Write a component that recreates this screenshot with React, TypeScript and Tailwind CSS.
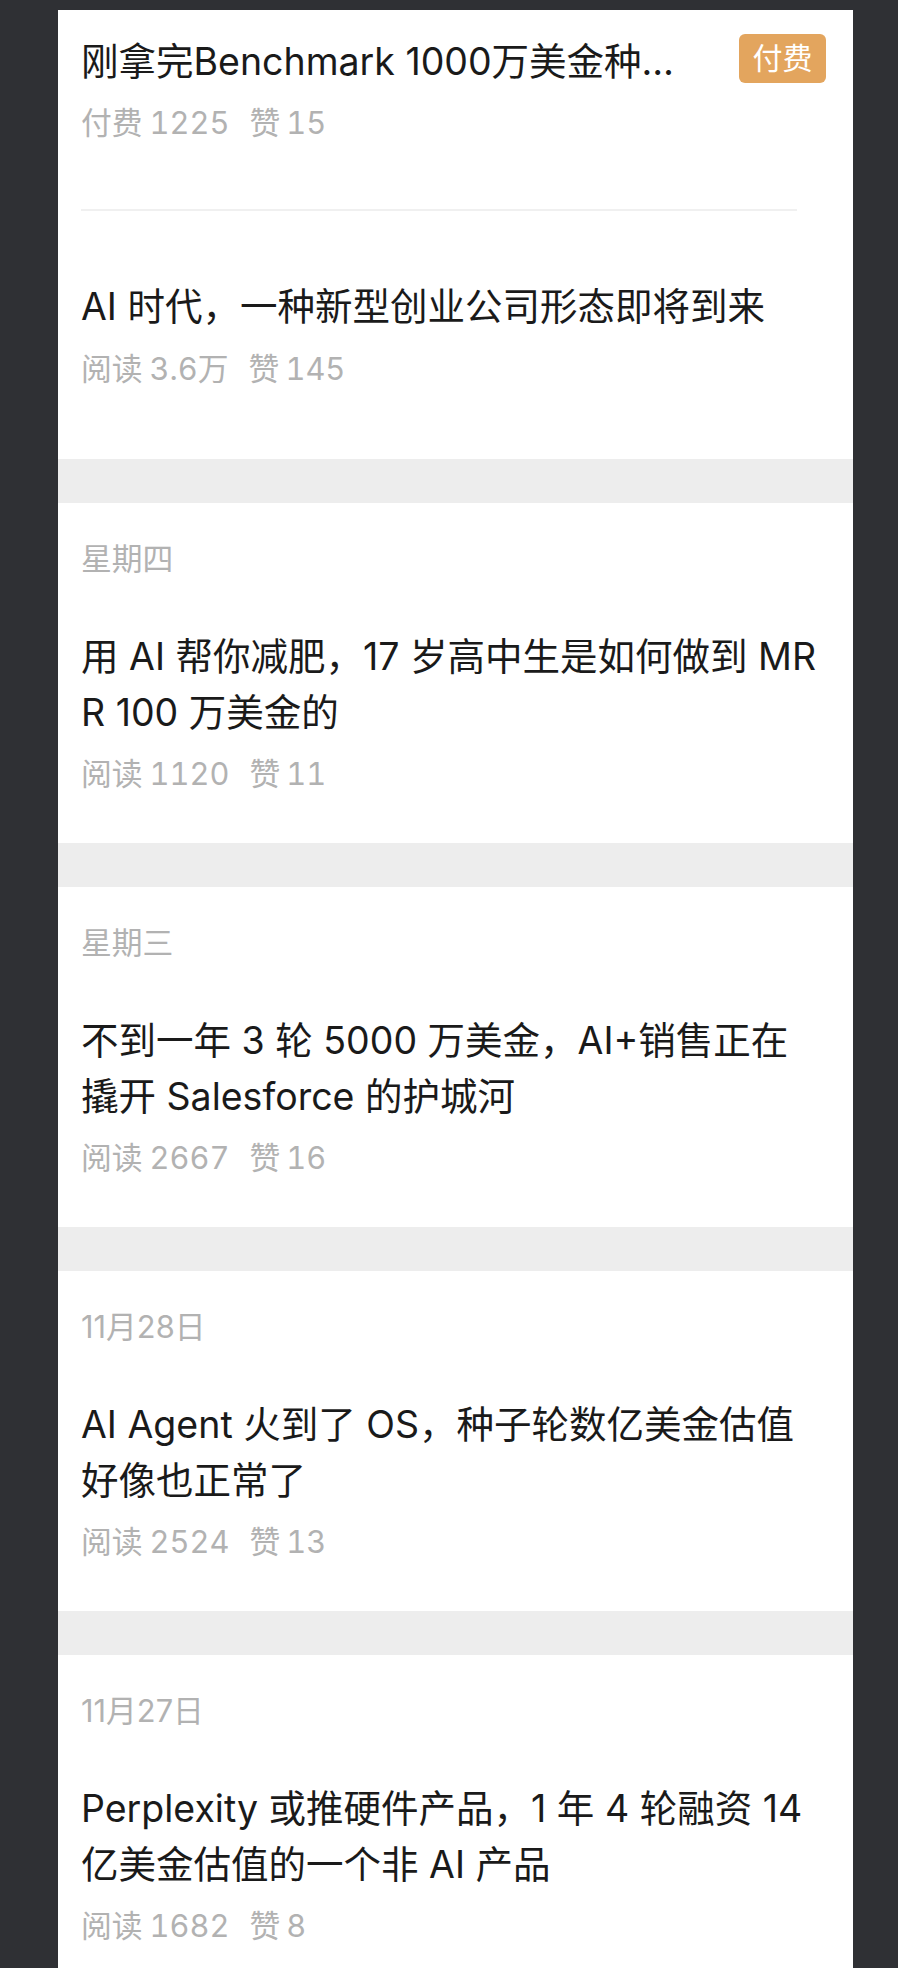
import React from "react";

const FONT = "font-['Inter','Noto_Sans_CJK_SC',sans-serif]";

function Meta({ label, count, likes }: { label: string; count: string; likes: string }) {
  return (
    <div className="flex items-center text-[30.8px] leading-[44px] text-[#b2b2b2] whitespace-nowrap tabular-nums">
      <span>{label}</span>
      <span className="ml-[7px]">{count}</span>
      <span className="ml-[20px]">赞</span>
      <span className="ml-[6px]">{likes}</span>
    </div>
  );
}

function Title({ lines }: { lines: string[] }) {
  return (
    <div className="text-[37.5px] leading-[56px] text-[#1a1a1a]">
      {lines.map((l, i) => (
        <div key={i} className="whitespace-nowrap">
          {l}
        </div>
      ))}
    </div>
  );
}

type Sec = { date: string; lines: string[]; count: string; likes: string };

const sections: Sec[] = [
  {
    date: "星期四",
    lines: ["用 AI 帮你减肥，17 岁高中生是如何做到 MR", "R 100 万美金的"],
    count: "1120",
    likes: "11",
  },
  {
    date: "星期三",
    lines: ["不到一年 3 轮 5000 万美金，AI+销售正在", "撬开 Salesforce 的护城河"],
    count: "2667",
    likes: "16",
  },
  {
    date: "11月28日",
    lines: ["AI Agent 火到了 OS，种子轮数亿美金估值", "好像也正常了"],
    count: "2524",
    likes: "13",
  },
  {
    date: "11月27日",
    lines: ["Perplexity 或推硬件产品，1 年 4 轮融资 14", "亿美金估值的一个非 AI 产品"],
    count: "1682",
    likes: "8",
  },
];

export default function App() {
  return (
    <div className={`${FONT} h-[1968px] overflow-hidden bg-[#2f3034] pl-[58px] pr-[45px] pt-[10px]`}>
      <div className="bg-white">
        {/* top card */}
        <div className="pl-[23px] pt-[24px] pb-[68px]">
          <div className="flex items-start pr-[27px]">
            <div className="flex-1 min-w-0 overflow-hidden">
              <Title lines={["刚拿完Benchmark 1000万美金种…"]} />
            </div>
            <div className="flex h-[49px] w-[87px] items-center justify-center rounded-[6px] bg-[#e3a55e] text-[30px] text-white">
              付费
            </div>
          </div>
          <div className="mt-[11px]">
            <Meta label="付费" count="1225" likes="15" />
          </div>
          <div className="mt-[64px] mr-[56px] h-[2px] bg-[#f0f0f0]" />
          <div className="mt-[68px]">
            <Title lines={["AI 时代，一种新型创业公司形态即将到来"]} />
          </div>
          <div className="mt-[12px]">
            <Meta label="阅读" count="3.6万" likes="145" />
          </div>
        </div>

        {sections.map((s, i) => (
          <React.Fragment key={i}>
            <div className="h-[44px] bg-[#ededed]" />
            <div className="pl-[23px] pt-[34px] pb-[47px]">
              <div className="text-[30.8px] leading-[44px] text-[#b2b2b2]">{s.date}</div>
              <div className="mt-[48px]">
                <Title lines={s.lines} />
              </div>
              <div className="mt-[11px]">
                <Meta label="阅读" count={s.count} likes={s.likes} />
              </div>
            </div>
          </React.Fragment>
        ))}
      </div>
    </div>
  );
}
